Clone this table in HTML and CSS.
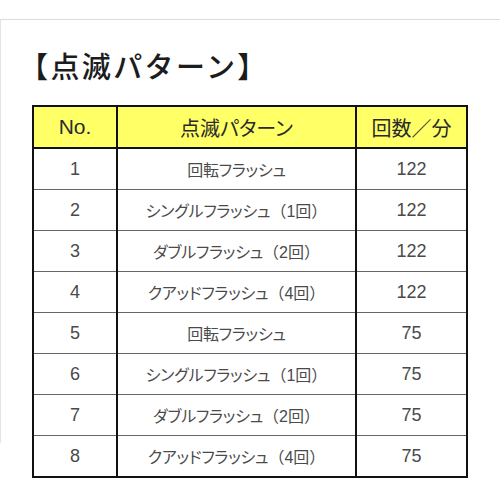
FILE: index.html
```html
<!DOCTYPE html>
<html lang="ja">
<head>
<meta charset="utf-8">
<link rel="stylesheet" href="styles.css">
</head>
<body>
<div class="panel">
  <h1 class="title">【点滅パターン】</h1>
  <table class="tbl">
    <colgroup><col class="c1"><col class="c2"><col class="c3"></colgroup>
    <thead>
      <tr><th class="no">No.</th><th>点滅パターン</th><th>回数／分</th></tr>
    </thead>
    <tbody>
      <tr><td class="num">1</td><td>回転フラッシュ</td><td class="num">122</td></tr>
      <tr><td class="num">2</td><td>シングルフラッシュ<span class="p">（1回）</span></td><td class="num">122</td></tr>
      <tr><td class="num">3</td><td>ダブルフラッシュ<span class="p">（2回）</span></td><td class="num">122</td></tr>
      <tr><td class="num">4</td><td>クアッドフラッシュ<span class="p">（4回）</span></td><td class="num">122</td></tr>
      <tr><td class="num">5</td><td>回転フラッシュ</td><td class="num">75</td></tr>
      <tr><td class="num">6</td><td>シングルフラッシュ<span class="p">（1回）</span></td><td class="num">75</td></tr>
      <tr><td class="num">7</td><td>ダブルフラッシュ<span class="p">（2回）</span></td><td class="num">75</td></tr>
      <tr><td class="num">8</td><td>クアッドフラッシュ<span class="p">（4回）</span></td><td class="num">75</td></tr>
    </tbody>
  </table>
</div>
</body>
</html>
```
FILE: styles.css
```css
html, body {
  margin: 0;
  padding: 0;
  background: #ffffff;
}
body {
  width: 500px;
  height: 500px;
  overflow: hidden;
  font-family: "Liberation Sans", "Noto Sans CJK JP", sans-serif;
}
.panel {
  margin-top: 19px;
  height: 424px;
  border-top: 1px solid #dcdcdc;
  border-left: 1px solid #e4e4e4;
  padding-top: 25px;
  padding-left: 31px;
  box-sizing: border-box;
}
.title {
  margin: 0;
  font-family: "Noto Sans CJK JP", sans-serif;
  font-size: 29px;
  font-weight: 500;
  line-height: 40px;
  color: #1c1c1c;
  letter-spacing: 2.4px;
  margin-left: -13px;
}
.tbl {
  margin-top: 20px;
  border-collapse: collapse;
  width: 434px;
  table-layout: fixed;
  border: 2px solid #111;
}
.c1 { width: 84px; }
.c2 { width: 239px; }
.c3 { width: 111px; }
.tbl th, .tbl td {
  text-align: center;
  padding: 0;
  border-left: 2px solid #111;
  border-right: 2px solid #111;
}
.tbl th {
  height: 40px;
  background: #ffff66;
  font-weight: 400;
  font-size: 20px;
  color: #2a2a2a;
  border-bottom: 2px solid #111;
  font-feature-settings: "palt";
}
.tbl th.no {
  font-size: 21px;
}
.tbl td {
  height: 40px;
  font-size: 16px;
  color: #4a4a4a;
  border-top: 1px solid #666;
  font-feature-settings: "palt";
  letter-spacing: -0.2px;
}
.tbl td .p {
  font-feature-settings: normal;
  letter-spacing: 0;
}
.tbl td.num {
  font-size: 18px;
  letter-spacing: 0;
}
```
